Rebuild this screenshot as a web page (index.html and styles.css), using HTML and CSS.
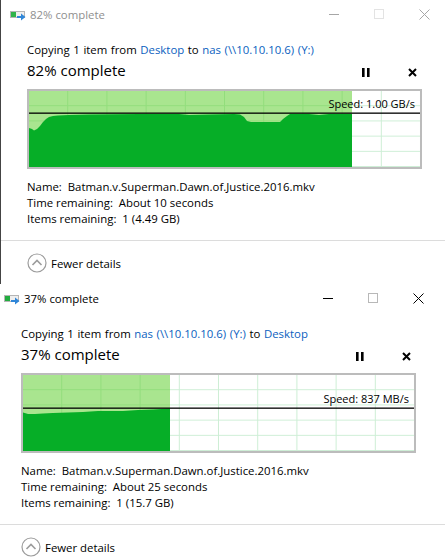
FILE: index.html
```html
<!DOCTYPE html>
<html lang="en">
<head>
    <meta charset="UTF-8">
    <meta name="viewport" content="width=device-width, initial-scale=1.0">
    <title>File copy progress</title>
    <link rel="stylesheet" href="styles.css">
</head>
<body>
    <!-- inactive window -->
    <section class="copy-window copy-window-back">
        <div class="titlebar">
            <svg class="app-icon" viewBox="0 0 16 11" width="16" height="11">
                <rect x="0" y="1" width="15" height="7" fill="#b5b5b5"/>
                <rect x="1" y="2" width="5" height="5" fill="#2fb34a"/>
                <rect x="6" y="2" width="8" height="5" fill="#eeeeee"/>
                <path d="M7 6h4V3.5L15.5 7 11 10.5V8H7z" fill="#2f86d8"/>
            </svg>
            <span class="title-text">82% complete</span>
            <div class="win-controls">
                <svg viewBox="0 0 11 11" width="11" height="11"><path d="M0 5.5h10" class="win-stroke"/></svg>
                <svg viewBox="0 0 11 11" width="11" height="11"><rect x="0.5" y="0.5" width="9" height="9" class="win-box"/></svg>
                <svg viewBox="0 0 11 11" width="11" height="11"><path d="M0.5 0.5l10 10M10.5 0.5l-10 10" class="win-stroke"/></svg>
            </div>
        </div>
        <div class="content">
            <p class="copy-line">Copying 1 item from <a href="#">Desktop</a> to <a href="#">nas (\\10.10.10.6) (Y:)</a></p>
            <div class="heading-row">
                <h2>82% complete</h2>
                <div class="job-controls">
                    <svg viewBox="0 0 8 9" width="8" height="9"><path d="M0 0h2.6v9H0zM5 0h2.6v9H5z"/></svg>
                    <svg viewBox="0 0 9 9" width="9" height="9"><path d="M1 1l7 7M8 1l-7 7" class="job-x"/></svg>
                </div>
            </div>
            <div class="chart">
                <svg viewBox="0 0 391 76" width="391" height="76">
                    <defs>
                        <pattern id="gridPaleA" width="39.2" height="15.2" patternUnits="userSpaceOnUse">
                            <path d="M38.7 0v15.2M0 14.7h39.2" class="grid-pale"/>
                        </pattern>
                        <pattern id="gridDarkA" width="39.2" height="15.2" patternUnits="userSpaceOnUse">
                            <path d="M38.7 0v15.2M0 14.7h39.2" class="grid-dark"/>
                        </pattern>
                    </defs>
                    <rect width="391" height="76" fill="url(#gridPaleA)"/>
                    <rect width="323" height="76" class="fill-light"/>
                    <rect width="323" height="76" fill="url(#gridDarkA)"/>
                    <polygon class="fill-solid" points="0,37 3,38 5,39.5 8,38 11,35 14,31 17,28 20,26 24,25 29,24.5 40,24 60,23.5 110,23 150,23 160,24 180,23.5 205,23 211,23.5 215,26 218,30 222,31 251,31 254,28 258,25 261,23 280,23 290,24 300,23 323,23 323,76 0,76"/>
                    <rect x="0" y="21.5" width="391" height="1.3" fill="#000"/>
                </svg>
                <span class="speed speed-high">Speed: 1.00 GB/s</span>
            </div>
            <div class="details">
                <div>Name:&nbsp; Batman.v.Superman.Dawn.of.Justice.2016.mkv</div>
                <div>Time remaining:&nbsp; About 10 seconds</div>
                <div>Items remaining:&nbsp; 1 (4.49 GB)</div>
            </div>
        </div>
        <div class="footer">
            <svg class="toggle" viewBox="0 0 20 20" width="20" height="20">
                <circle cx="10" cy="10" r="9" class="toggle-ring"/>
                <path d="M5.5 12l4.5-4.500 4.500 4.500" class="toggle-chev"/>
            </svg>
            <span class="toggle-label">Fewer details</span>
        </div>
    </section>

    <!-- active window -->
    <section class="copy-window copy-window-front">
        <div class="titlebar">
            <svg class="app-icon" viewBox="0 0 16 11" width="16" height="11">
                <rect x="0" y="1" width="15" height="7" fill="#b5b5b5"/>
                <rect x="1" y="2" width="5" height="5" fill="#22ad3f"/>
                <rect x="6" y="2" width="8" height="5" fill="#eeeeee"/>
                <path d="M7 6h4V3.5L15.5 7 11 10.5V8H7z" fill="#2f86d8"/>
            </svg>
            <span class="title-text">37% complete</span>
            <div class="win-controls">
                <svg viewBox="0 0 11 11" width="11" height="11"><path d="M0 5.5h10" class="win-stroke"/></svg>
                <svg viewBox="0 0 11 11" width="11" height="11"><rect x="0.5" y="0.5" width="9" height="9" class="win-box"/></svg>
                <svg viewBox="0 0 11 11" width="11" height="11"><path d="M0.5 0.5l10 10M10.5 0.5l-10 10" class="win-stroke"/></svg>
            </div>
        </div>
        <div class="content">
            <p class="copy-line">Copying 1 item from <a href="#">nas (\\10.10.10.6) (Y:)</a> to <a href="#">Desktop</a></p>
            <div class="heading-row">
                <h2>37% complete</h2>
                <div class="job-controls">
                    <svg viewBox="0 0 8 9" width="8" height="9"><path d="M0 0h2.6v9H0zM5 0h2.6v9H5z"/></svg>
                    <svg viewBox="0 0 9 9" width="9" height="9"><path d="M1 1l7 7M8 1l-7 7" class="job-x"/></svg>
                </div>
            </div>
            <div class="chart">
                <svg viewBox="0 0 391 76" width="391" height="76">
                    <defs>
                        <pattern id="gridPaleB" width="39.2" height="15.2" patternUnits="userSpaceOnUse">
                            <path d="M38.7 0v15.2M0 14.7h39.2" class="grid-pale"/>
                        </pattern>
                        <pattern id="gridDarkB" width="39.2" height="15.2" patternUnits="userSpaceOnUse">
                            <path d="M38.7 0v15.2M0 14.7h39.2" class="grid-dark"/>
                        </pattern>
                    </defs>
                    <rect width="391" height="76" fill="url(#gridPaleB)"/>
                    <rect width="147" height="76" class="fill-light"/>
                    <rect width="147" height="76" fill="url(#gridDarkB)"/>
                    <polygon class="fill-solid" points="0,37.500 5,39 12,39 20,38.500 30,38 60,37 75,36 100,36 115,35 130,34.500 147,33.500 147,76 0,76"/>
                    <rect x="0" y="32.500" width="391" height="1.300" fill="#000"/>
                </svg>
                <span class="speed speed-low">Speed: 837 MB/s</span>
            </div>
            <div class="details">
                <div>Name:&nbsp; Batman.v.Superman.Dawn.of.Justice.2016.mkv</div>
                <div>Time remaining:&nbsp; About 25 seconds</div>
                <div>Items remaining:&nbsp; 1 (15.7 GB)</div>
            </div>
        </div>
        <div class="footer">
            <svg class="toggle" viewBox="0 0 20 20" width="20" height="20">
                <circle cx="10" cy="10" r="9" class="toggle-ring"/>
                <path d="M5.5 12l4.5-4.500 4.500 4.500" class="toggle-chev"/>
            </svg>
            <span class="toggle-label">Fewer details</span>
        </div>
    </section>
</body>
</html>
```

FILE: styles.css
```css
* {
    margin: 0;
    padding: 0;
    box-sizing: border-box;
}

body {
    font-family: "Open Sans", "Noto Sans", sans-serif;
    font-size: 11.4px;
    color: #000;
    background: #fff;
    overflow: hidden;
}

.copy-window {
    height: 284px;
    padding-left: 26px;
    border-left: 1px solid #444;
}

.copy-window-front {
    height: 273px;
    padding-left: 21px;
    border-left: 0;
}

.titlebar {
    display: flex;
    align-items: center;
    height: 28px;
    margin-left: -17px;
    padding-right: 15px;
}

.copy-window-front .titlebar {
    padding-right: 21px;
}

.app-icon {
    margin-right: 4px;
    margin-top: 2px;
}

.title-text {
    font-size: 11.4px;
    flex: 1;
}

.copy-window-back .title-text {
    color: #8f8f8f;
}

.win-controls {
    display: flex;
    gap: 34px;
}

.win-stroke {
    fill: none;
    stroke: #000;
    stroke-width: 1;
}

.win-box {
    fill: none;
    stroke: #b8b8b8;
}

.copy-window-back .win-stroke {
    stroke: #a6a6a6;
}

.copy-window-back .win-box {
    stroke: #e3e3e3;
}

.content {
    padding-top: 13px;
}

.copy-line {
    line-height: 18px;
    word-spacing: 0.6px;
}

.copy-line a {
    color: #0b5fc0;
    text-decoration: none;
}

.heading-row {
    display: flex;
    align-items: center;
    height: 22px;
    padding-right: 28px;
}

.copy-window-front .heading-row {
    padding-right: 34px;
}

.heading-row h2 {
    flex: 1;
    font-size: 15px;
    font-weight: 400;
}

.job-controls {
    display: flex;
    gap: 38px;
    align-items: center;
    padding-top: 4px;
}

.job-x {
    fill: none;
    stroke: #000;
    stroke-width: 2;
}

.chart {
    position: relative;
    width: 395px;
    height: 80px;
    margin-top: 8px;
    border: 2px solid #bcbcbc;
    background: #fff;
}

.chart svg {
    display: block;
}

.fill-light {
    fill: #a9e58f;
}

.fill-solid {
    fill: #06ae27;
}

.grid-pale {
    fill: none;
    stroke: #cdeed5;
}

.grid-dark {
    fill: none;
    stroke: #92dd7c;
}

.speed {
    position: absolute;
    right: 5px;
    font-size: 11px;
    line-height: 16px;
}

.speed-high {
    top: 5px;
}

.speed-low {
    top: 16px;
}

.details {
    margin-top: 10px;
    line-height: 16px;
}

.footer {
    display: flex;
    align-items: center;
    gap: 4px;
    height: 44px;
    margin-top: 13px;
    margin-left: -26px;
    padding-left: 26px;
    border-top: 1px solid #dcdcdc;
}

.copy-window-front .footer {
    margin-left: -21px;
    padding-left: 21px;
}

.toggle-label {
    margin-top: 2px;
}

.toggle-ring {
    fill: #fff;
    stroke: #9c9c9c;
    stroke-width: 1.2;
}

.toggle-chev {
    fill: none;
    stroke: #9c9c9c;
    stroke-width: 1.6;
}
```
